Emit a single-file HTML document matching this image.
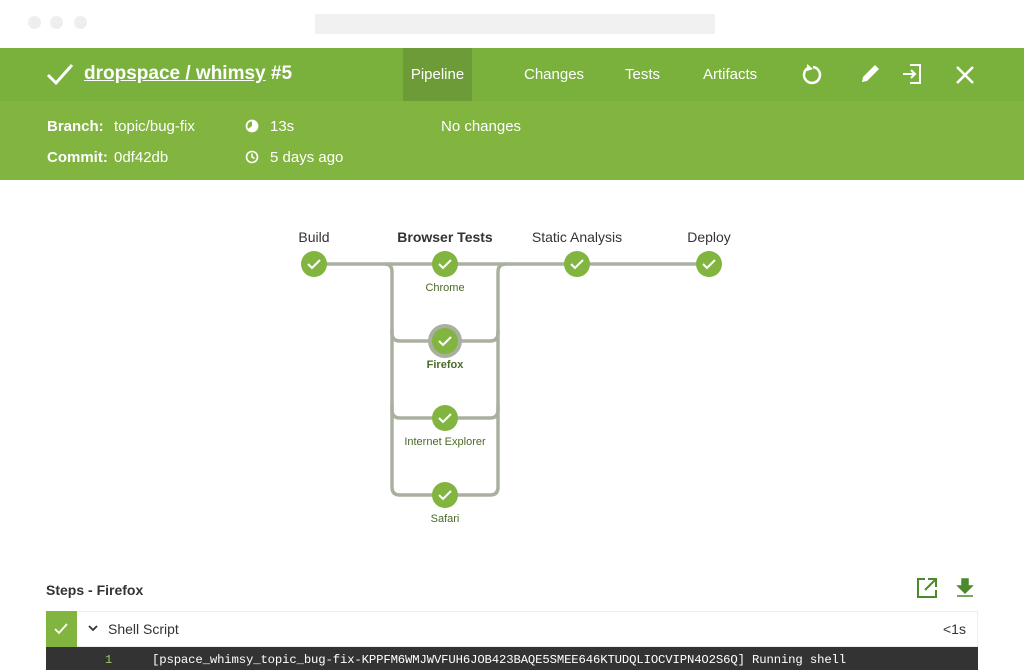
<!DOCTYPE html>
<html><head><meta charset="utf-8"><style>
*{margin:0;padding:0;box-sizing:border-box}
body{width:1024px;height:670px;overflow:hidden;background:#fff;font-family:"Liberation Sans",sans-serif;position:relative}
.abs{position:absolute}
.dot{position:absolute;top:16px;width:13px;height:13px;border-radius:50%;background:#eee}
.top{left:0;top:48px;width:1024px;height:53px;background:#79b13c}
.sub{left:0;top:101px;width:1024px;height:79px;background:#82b440;color:#fff;font-size:15px}
.tab{position:absolute;top:0;height:53px;line-height:53px;color:#fff;font-size:15px}
</style></head><body>
<div class="dot" style="left:28px"></div><div class="dot" style="left:50px"></div><div class="dot" style="left:74px"></div>
<div class="abs" style="left:315px;top:14px;width:400px;height:20px;background:#f1f1f1"></div>
<div class="abs top">
 <svg class="abs" style="left:46px;top:14px" width="28" height="24" viewBox="0 0 28 24"><path d="M2 13 L10 21 L26 3" fill="none" stroke="#fff" stroke-width="3"/></svg>
 <div class="abs" style="left:84px;top:15px;color:#fff;font-size:19px;font-weight:bold"><span style="text-decoration:underline">dropspace / whimsy</span> #5</div>
 <div class="tab" style="left:403px;width:69px;background:#6d9b38;text-align:center">Pipeline</div>
 <div class="tab" style="left:524px">Changes</div>
 <div class="tab" style="left:625px">Tests</div>
 <div class="tab" style="left:703px">Artifacts</div>
 <svg class="abs" style="left:800px;top:15px" width="24" height="24" viewBox="0 0 24 24"><path d="M8 5 A8 8 0 1 0 13 4" fill="none" stroke="#fff" stroke-width="2.5"/><path d="M7 1 L7 8 L13 6Z" fill="#fff"/></svg>
 <svg class="abs" style="left:858px;top:14px" width="24" height="24" viewBox="0 0 24 24"><path d="M4 20 L5 15 L17 3 L21 7 L9 19Z" fill="#fff"/></svg>
 <svg class="abs" style="left:900px;top:14px" width="24" height="24" viewBox="0 0 24 24"><path d="M10 3 H20 V21 H10 M3 12 H15 M11 8 L15 12 L11 16" fill="none" stroke="#fff" stroke-width="2"/></svg>
 <svg class="abs" style="left:954px;top:16px" width="22" height="22" viewBox="0 0 22 22"><path d="M3 3 L19 19 M19 3 L3 19" stroke="#fff" stroke-width="2.5"/></svg>
</div>
<div class="abs sub">
 <div class="abs" style="left:47px;top:17px;font-weight:bold">Branch:</div><div class="abs" style="left:114px;top:17px">topic/bug-fix</div>
 <div class="abs" style="left:47px;top:48px;font-weight:bold">Commit:</div><div class="abs" style="left:114px;top:48px">0df42db</div>
 <svg class="abs" style="left:245px;top:18px" width="14" height="14"><circle cx="7" cy="7" r="5.5" fill="none" stroke="#fff" stroke-width="1.8"/><path d="M7 7 L7 2 A5 5 0 1 1 3 10Z" fill="#fff"/></svg>
 <div class="abs" style="left:270px;top:17px">13s</div>
 <svg class="abs" style="left:245px;top:49px" width="14" height="14"><circle cx="7" cy="7" r="5.5" fill="none" stroke="#fff" stroke-width="1.6"/><path d="M7 3.5 V7 L9.5 8.5" fill="none" stroke="#fff" stroke-width="1.5"/></svg>
 <div class="abs" style="left:270px;top:48px">5 days ago</div>
 <div class="abs" style="left:441px;top:17px">No changes</div>
</div>
<svg class="abs" style="left:0;top:0" width="1024" height="560">
 <g fill="none" stroke="#a9b0a0" stroke-width="3.5">
  <path d="M314 264 H709"/>
  <path d="M385 264 Q392 264 392 272 V333 Q392 341 400 341 H490 Q498 341 498 333 V272 Q498 264 506 264"/>
  <path d="M392 330 V410 Q392 418 400 418 H490 Q498 418 498 410 V330"/>
  <path d="M392 405 V487 Q392 495 400 495 H490 Q498 495 498 487 V405"/>
 </g>
 <circle cx="445" cy="341" r="17" fill="#a9b0a0"/>
 <g fill="#82b440">
  <circle cx="314" cy="264" r="13"/><circle cx="445" cy="264" r="13"/><circle cx="577" cy="264" r="13"/><circle cx="709" cy="264" r="13"/>
  <circle cx="445" cy="341" r="13"/><circle cx="445" cy="418" r="13"/><circle cx="445" cy="495" r="13"/>
 </g>
 <g fill="none" stroke="#fff" stroke-width="2">
  <path d="M308 264 l4 4 l8 -8"/><path d="M439 264 l4 4 l8 -8"/><path d="M571 264 l4 4 l8 -8"/><path d="M703 264 l4 4 l8 -8"/>
  <path d="M439 341 l4 4 l8 -8"/><path d="M439 418 l4 4 l8 -8"/><path d="M439 495 l4 4 l8 -8"/>
 </g>
 <g font-family="Liberation Sans,sans-serif" fill="#333" font-size="14" text-anchor="middle">
  <text x="314" y="242">Build</text><text x="445" y="242" font-weight="bold">Browser Tests</text><text x="577" y="242">Static Analysis</text><text x="709" y="242">Deploy</text>
 </g>
 <g font-family="Liberation Sans,sans-serif" fill="#4a6a28" font-size="11" text-anchor="middle">
  <text x="445" y="291">Chrome</text><text x="445" y="368" font-weight="bold">Firefox</text><text x="445" y="445">Internet Explorer</text><text x="445" y="522">Safari</text>
 </g>
</svg>
<div class="abs" style="left:46px;top:582px;font-size:14px;font-weight:bold;color:#333">Steps - Firefox</div>
<svg class="abs" style="left:916px;top:577px" width="22" height="22" viewBox="0 0 22 22"><path d="M9 2 H2 V20 H20 V13 M12 2 H20 V10 M20 2 L9 13" fill="none" stroke="#4a8a2a" stroke-width="2"/></svg>
<svg class="abs" style="left:955px;top:577px" width="20" height="22" viewBox="0 0 20 22"><path d="M7 2 H13 V9 H17 L10 16 L3 9 H7Z M2 19 H18" fill="#4a8a2a" stroke="#4a8a2a" stroke-width="1.5"/></svg>
<div class="abs" style="left:46px;top:611px;width:932px;height:36px;border:1px solid #eee;background:#fff"></div>
<div class="abs" style="left:46px;top:611px;width:31px;height:36px;background:#82b440"></div>
<svg class="abs" style="left:53px;top:621px" width="16" height="16"><path d="M2 8 l4 4 l8 -9" fill="none" stroke="#fff" stroke-width="1.8"/></svg>
<svg class="abs" style="left:88px;top:625px" width="10" height="8"><path d="M1 1 L5 5 L9 1" fill="none" stroke="#333" stroke-width="1.8"/></svg>
<div class="abs" style="left:108px;top:621px;font-size:14px;color:#333">Shell Script</div>
<div class="abs" style="left:943px;top:621px;font-size:14px;color:#333">&lt;1s</div>
<div class="abs" style="left:46px;top:647px;width:932px;height:23px;background:#333"></div>
<div class="abs" style="left:105px;top:653px;font-family:'Liberation Mono',monospace;font-size:12px;color:#9acd60">1</div>
<div class="abs" style="left:152px;top:653px;font-family:'Liberation Mono',monospace;font-size:12.3px;letter-spacing:-0.15px;color:#fff;white-space:nowrap">[pspace_whimsy_topic_bug-fix-KPPFM6WMJWVFUH6JOB423BAQE5SMEE646KTUDQLIOCVIPN4O2S6Q] Running shell</div>
</body></html>
